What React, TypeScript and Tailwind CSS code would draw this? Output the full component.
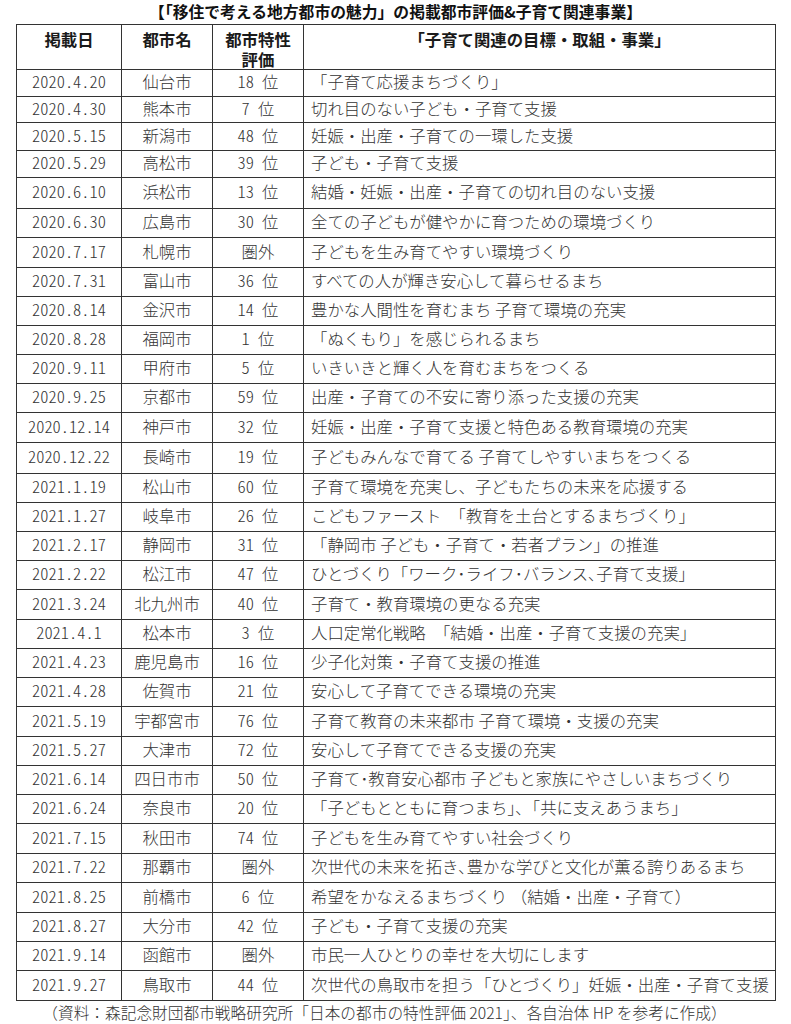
import React from "react";

type Row = { date: string; city: string; rank: string; goal: string; h: string };

const rows: Row[] = [
  { date: "2020.4.20", city: "仙台市", rank: "18 位", goal: "「子育て応援まちづくり」", h: "h-[27px]" },
  { date: "2020.4.30", city: "熊本市", rank: "7 位", goal: "切れ目のない子ども・子育て支援", h: "h-[26px]" },
  { date: "2020.5.15", city: "新潟市", rank: "48 位", goal: "妊娠・出産・子育ての一環した支援", h: "h-[28px]" },
  { date: "2020.5.29", city: "高松市", rank: "39 位", goal: "子ども・子育て支援", h: "h-[27px]" },
  { date: "2020.6.10", city: "浜松市", rank: "13 位", goal: "結婚・妊娠・出産・子育ての切れ目のない支援", h: "h-[31px]" },
  { date: "2020.6.30", city: "広島市", rank: "30 位", goal: "全ての子どもが健やかに育つための環境づくり", h: "h-[29px]" },
  { date: "2020.7.17", city: "札幌市", rank: "圏外", goal: "子どもを生み育てやすい環境づくり", h: "h-[30px]" },
  { date: "2020.7.31", city: "富山市", rank: "36 位", goal: "すべての人が輝き安心して暮らせるまち", h: "h-[29px]" },
  { date: "2020.8.14", city: "金沢市", rank: "14 位", goal: "豊かな人間性を育むまち 子育て環境の充実", h: "h-[29px]" },
  { date: "2020.8.28", city: "福岡市", rank: "1 位", goal: "「ぬくもり」を感じられるまち", h: "h-[29px]" },
  { date: "2020.9.11", city: "甲府市", rank: "5 位", goal: "いきいきと輝く人を育むまちをつくる", h: "h-[29px]" },
  { date: "2020.9.25", city: "京都市", rank: "59 位", goal: "出産・子育ての不安に寄り添った支援の充実", h: "h-[29px]" },
  { date: "2020.12.14", city: "神戸市", rank: "32 位", goal: "妊娠・出産・子育て支援と特色ある教育環境の充実", h: "h-[30px]" },
  { date: "2020.12.22", city: "長崎市", rank: "19 位", goal: "子どもみんなで育てる 子育てしやすいまちをつくる", h: "h-[31px]" },
  { date: "2021.1.19", city: "松山市", rank: "60 位", goal: "子育て環境を充実し、子どもたちの未来を応援する", h: "h-[29px]" },
  { date: "2021.1.27", city: "岐阜市", rank: "26 位", goal: "こどもファースト　「教育を土台とするまちづくり」", h: "h-[29px]" },
  { date: "2021.2.17", city: "静岡市", rank: "31 位", goal: "「静岡市 子ども・子育て・若者プラン」の推進", h: "h-[29px]" },
  { date: "2021.2.22", city: "松江市", rank: "47 位", goal: "ひとづくり「ワーク･ライフ･バランス､子育て支援」", h: "h-[29px]" },
  { date: "2021.3.24", city: "北九州市", rank: "40 位", goal: "子育て・教育環境の更なる充実", h: "h-[30px]" },
  { date: "2021.4.1", city: "松本市", rank: "3 位", goal: "人口定常化戦略　「結婚・出産・子育て支援の充実」", h: "h-[29px]" },
  { date: "2021.4.23", city: "鹿児島市", rank: "16 位", goal: "少子化対策・子育て支援の推進", h: "h-[29px]" },
  { date: "2021.4.28", city: "佐賀市", rank: "21 位", goal: "安心して子育てできる環境の充実", h: "h-[29px]" },
  { date: "2021.5.19", city: "宇都宮市", rank: "76 位", goal: "子育て教育の未来都市 子育て環境・支援の充実", h: "h-[30px]" },
  { date: "2021.5.27", city: "大津市", rank: "72 位", goal: "安心して子育てできる支援の充実", h: "h-[29px]" },
  { date: "2021.6.14", city: "四日市市", rank: "50 位", goal: "子育て･教育安心都市 子どもと家族にやさしいまちづくり", h: "h-[29px]" },
  { date: "2021.6.24", city: "奈良市", rank: "20 位", goal: "「子どもとともに育つまち｣､「共に支えあうまち」", h: "h-[29px]" },
  { date: "2021.7.15", city: "秋田市", rank: "74 位", goal: "子どもを生み育てやすい社会づくり", h: "h-[30px]" },
  { date: "2021.7.22", city: "那覇市", rank: "圏外", goal: "次世代の未来を拓き､豊かな学びと文化が薫る誇りあるまち", h: "h-[29px]" },
  { date: "2021.8.25", city: "前橋市", rank: "6 位", goal: "希望をかなえるまちづくり （結婚・出産・子育て）", h: "h-[30px]" },
  { date: "2021.8.27", city: "大分市", rank: "42 位", goal: "子ども・子育て支援の充実", h: "h-[29px]" },
  { date: "2021.9.14", city: "函館市", rank: "圏外", goal: "市民一人ひとりの幸せを大切にします", h: "h-[29px]" },
  { date: "2021.9.27", city: "鳥取市", rank: "44 位", goal: "次世代の鳥取市を担う「ひとづくり」妊娠・出産・子育て支援", h: "h-[29px]" },
];

export default function App() {
  return (
    <div className="w-[791px] h-[1024px] bg-white text-[#333] font-light font-['Noto_Sans_CJK_JP',sans-serif]">
      <div className="h-[24px] flex items-center justify-center text-[15.8px] font-bold leading-none text-[#111]">
        【「移住で考える地方都市の魅力」の掲載都市評価&amp;子育て関連事業】
      </div>

      <div className="ml-[16px] w-[760px] border border-[#333] text-[16.4px] leading-none">
        {/* header */}
        <div className="grid grid-cols-[105px_91px_91px_1fr] h-[45px] border-b border-[#333] font-bold text-[#1a1a1a]">
          <div className="border-r border-[#333] flex justify-center pt-[6px]">掲載日</div>
          <div className="border-r border-[#333] flex justify-center pt-[6px]">都市名</div>
          <div className="border-r border-[#333] flex flex-col items-center pt-[6px] gap-[4px]">
            <span>都市特性</span>
            <span>評価</span>
          </div>
          <div className="flex justify-center pt-[6px]">「子育て関連の目標・取組・事業」</div>
        </div>

        {rows.map((r, i) => (
          <div
            key={r.date}
            className={`grid grid-cols-[105px_91px_91px_1fr] ${r.h} ${i < rows.length - 1 ? "border-b border-[#333]" : ""}`}
          >
            <div className="border-r border-[#333] flex items-center justify-center pb-[3px] [font-feature-settings:'hwid']">
              {r.date}
            </div>
            <div className="border-r border-[#333] flex items-center justify-center pb-[3px]">{r.city}</div>
            <div className="border-r border-[#333] flex items-center justify-center pb-[3px] [font-feature-settings:'hwid']">
              {r.rank}
            </div>
            <div className="flex items-center pl-[7px] pb-[3px] whitespace-nowrap">{r.goal}</div>
          </div>
        ))}
      </div>

      <div className="h-[24px] flex items-center justify-center pr-[22px] text-[15.7px] leading-none">
        （資料：森記念財団都市戦略研究所「日本の都市の特性評価 2021」、各自治体 HP を参考に作成）
      </div>
    </div>
  );
}
